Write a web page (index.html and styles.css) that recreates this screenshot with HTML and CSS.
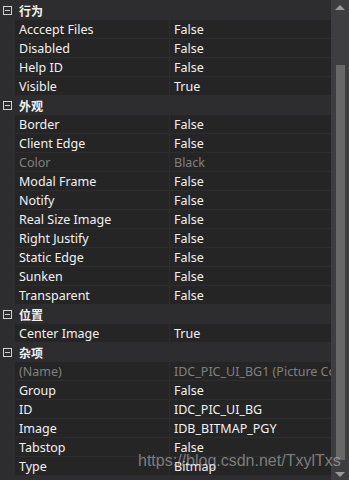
FILE: index.html
```html
<!DOCTYPE html>
<html>
<head>
<meta charset="utf-8">
<title>Properties</title>
<link rel="stylesheet" href="styles.css">
</head>
<body>
<div class="props">
  <div class="grid">
    <div class="cat"><span class="box"></span><span class="cat-name">行为</span></div>
    <div class="row"><span class="name">Acccept Files</span><span class="val">False</span></div>
    <div class="row"><span class="name">Disabled</span><span class="val">False</span></div>
    <div class="row"><span class="name">Help ID</span><span class="val">False</span></div>
    <div class="row"><span class="name">Visible</span><span class="val">True</span></div>

    <div class="cat"><span class="box"></span><span class="cat-name">外观</span></div>
    <div class="row"><span class="name">Border</span><span class="val">False</span></div>
    <div class="row"><span class="name">Client Edge</span><span class="val">False</span></div>
    <div class="row off"><span class="name">Color</span><span class="val">Black</span></div>
    <div class="row"><span class="name">Modal Frame</span><span class="val">False</span></div>
    <div class="row"><span class="name">Notify</span><span class="val">False</span></div>
    <div class="row"><span class="name">Real Size Image</span><span class="val">False</span></div>
    <div class="row"><span class="name">Right Justify</span><span class="val">False</span></div>
    <div class="row"><span class="name">Static Edge</span><span class="val">False</span></div>
    <div class="row"><span class="name">Sunken</span><span class="val">False</span></div>
    <div class="row"><span class="name">Transparent</span><span class="val">False</span></div>

    <div class="cat"><span class="box"></span><span class="cat-name">位置</span></div>
    <div class="row"><span class="name">Center Image</span><span class="val">True</span></div>

    <div class="cat"><span class="box"></span><span class="cat-name">杂项</span></div>
    <div class="row off"><span class="name">(Name)</span><span class="val">IDC_PIC_UI_BG1 (Picture Control)</span></div>
    <div class="row"><span class="name">Group</span><span class="val">False</span></div>
    <div class="row"><span class="name">ID</span><span class="val">IDC_PIC_UI_BG</span></div>
    <div class="row"><span class="name">Image</span><span class="val">IDB_BITMAP_PGY</span></div>
    <div class="row"><span class="name">Tabstop</span><span class="val">False</span></div>
    <div class="row"><span class="name">Type</span><span class="val">Bitmap</span></div>
  </div>
  <div class="scroll">
    <span class="arrow up"></span>
    <span class="track"><span class="thumb"></span></span>
    <span class="arrow down"></span>
  </div>
  <div class="mark">https://blog.csdn.net/TxylTxs</div>
</div>
</body>
</html>
```
FILE: styles.css
```css
body {
   margin: 0;
   background-color: #2d2d30;
   font-family: "Noto Sans", "Noto Sans CJK SC", sans-serif;
   font-size: 12.5px;
   color: #f1f1f1;
}

.props {
   position: relative;
   display: flex;
   width: 349px;
   height: 480px;
   overflow: hidden;
}

.grid {
   width: 331px;
   min-width: 0;
   padding-top: 1px;
   display: flex;
   flex-direction: column;
}

.cat {
   display: flex;
   align-items: center;
   height: 19px;
   flex-shrink: 0;
}

.box {
   position: relative;
   box-sizing: border-box;
   width: 9px;
   height: 9px;
   margin: 0 7px 0 3px;
   border: 1px solid #d0d0d0;
}

.box::after {
   content: "";
   position: absolute;
   left: 1px;
   top: 3px;
   width: 5px;
   height: 1px;
   background: #d0d0d0;
}

.cat-name {
   font-family: "Noto Sans CJK SC", sans-serif;
   font-weight: bold;
   font-size: 12px;
}

.row {
   display: flex;
   height: 18px;
   margin-left: 15px;
   border-bottom: 1px solid #2d2d30;
   background-color: #252526;
   line-height: 20px;
   overflow: hidden;
   flex-shrink: 0;
}

.name {
   width: 150px;
   padding-left: 4px;
   border-right: 1px solid #2d2d30;
   white-space: nowrap;
   overflow: hidden;
   flex-shrink: 0;
}

.val {
   flex: 1;
   min-width: 0;
   padding-left: 4px;
   white-space: nowrap;
   overflow: hidden;
}

.off .name, .off .val {
   color: #808080;
}

.scroll {
   width: 18px;
   flex-shrink: 0;
   display: flex;
   flex-direction: column;
   align-items: center;
   background-color: #3e3e42;
}

.arrow {
   width: 0;
   height: 0;
   border-left: 5px solid transparent;
   border-right: 5px solid transparent;
}

.up {
   margin: 5px 0 0;
   border-bottom: 5px solid #999999;
}

.down {
   margin: 0 0 3px;
   border-top: 5px solid #999999;
}

.track {
   flex: 1;
   display: flex;
   flex-direction: column;
   padding: 55px 0 12px;
}

.thumb {
   flex: 1;
   width: 9px;
   background-color: #686868;
}

.mark {
   position: absolute;
   left: 138px;
   top: 452px;
   font-family: "Liberation Sans", sans-serif;
   font-size: 16px;
   color: rgba(200, 200, 200, 0.55);
   white-space: nowrap;
}
```
